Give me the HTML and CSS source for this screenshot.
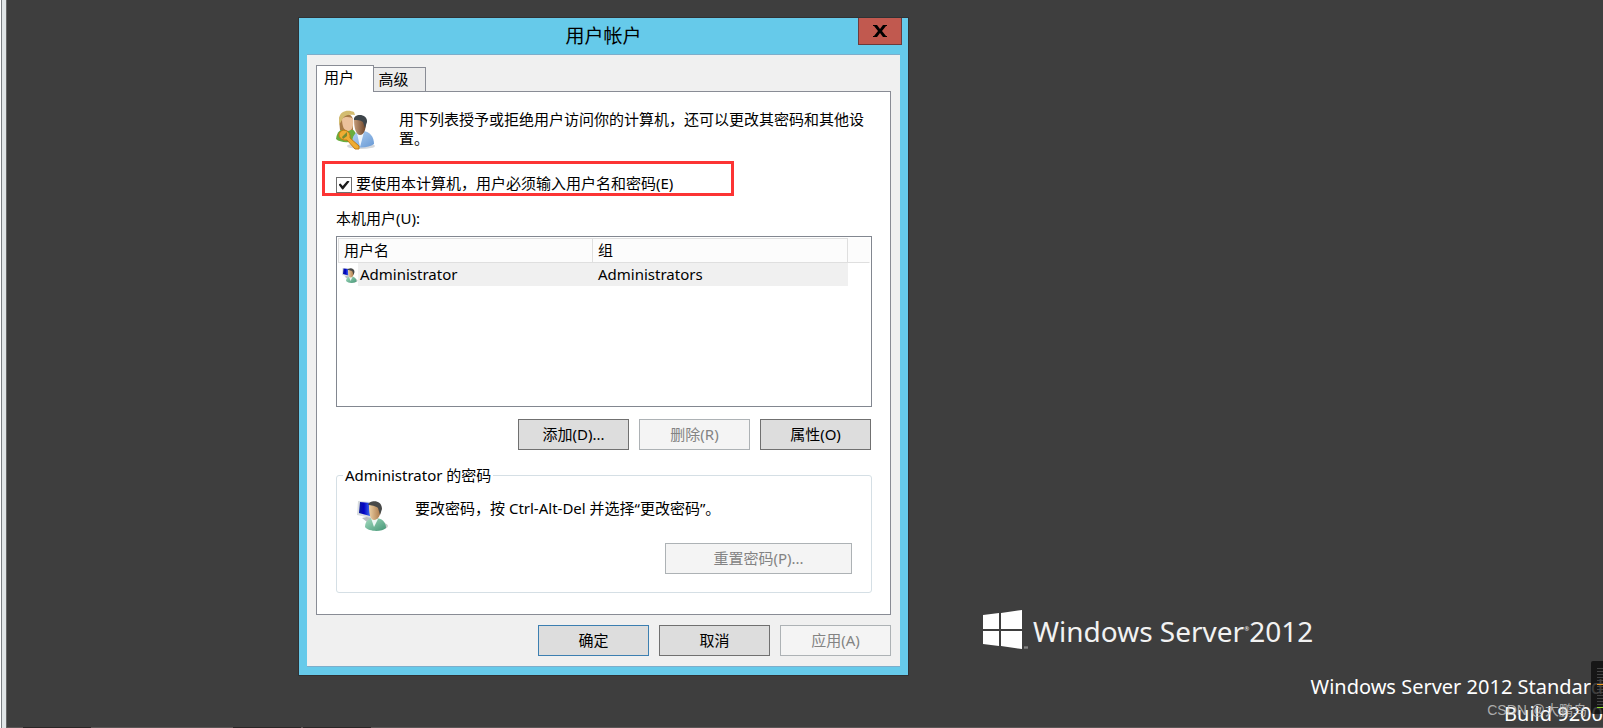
FILE: index.html
```html
<!DOCTYPE html>
<html lang="zh-CN">
<head>
<meta charset="utf-8">
<title>用户帐户</title>
<link rel="stylesheet" href="styles.css">
</head>
<body>
<svg class="defs" aria-hidden="true">
  <defs>
    <linearGradient id="screen" x1="0" y1="0" x2="1" y2="0"><stop offset="0" stop-color="#0a1a9c"/><stop offset=".45" stop-color="#0303c4"/><stop offset="1" stop-color="#3d6cf0"/></linearGradient>
    <linearGradient id="skin" x1="0" y1="0" x2="1" y2="0"><stop offset="0" stop-color="#ecd0a4"/><stop offset="1" stop-color="#a87545"/></linearGradient>
    <linearGradient id="darkskin" x1="0" y1="0" x2="1" y2="0"><stop offset="0" stop-color="#c49a78"/><stop offset="1" stop-color="#6b4328"/></linearGradient>
    <linearGradient id="green" x1="0" y1="0" x2="1" y2="1"><stop offset="0" stop-color="#a5dcc0"/><stop offset="1" stop-color="#459676"/></linearGradient>
    <linearGradient id="blue" x1="0" y1="0" x2="1" y2="1"><stop offset="0" stop-color="#b4d4f5"/><stop offset="1" stop-color="#6798d4"/></linearGradient>
    <symbol id="user" viewBox="0 0 32 32">
      <ellipse cx="21" cy="27" rx="10" ry="4" fill="#c9cbc9"/>
      <path d="M5 19l9-2 2 5-6 1z" fill="#b9bec0"/>
      <path d="M1 2l13 1v16L0 16z" fill="#d8dcdf"/>
      <path d="M3 3l10 1v13L2 14z" fill="url(#screen)"/>
      <path d="M8 28c0-6 4-9 10-9 7 0 11 4 11 10-4 4-17 4-21-1z" fill="url(#green)"/>
      <path d="M14 19l3 9 4-8z" fill="#eef7f5"/>
      <path d="M12 7c0-4 11-5 12 2 0 7-3 12-7 12s-5-7-5-14z" fill="url(#skin)"/>
      <path d="M11 6c1-5 14-6 14 4l-2 6-2-7c-2-2-7-3-10-3z" fill="#484948"/>
    </symbol>
  </defs>
</svg>
<div class="screen">
  <div class="edge"></div>
  <main class="desktop">
    <div class="brand">
      <svg class="flag" viewBox="0 0 46 40" aria-hidden="true">
        <path d="M0 5l16-2v16H0zM18 3l21-3v19H18zM0 21h16v15L0 34zM18 21h21v18l-21-3z" fill="#fff"/>
        <path d="M41 37h4M41 38h4" stroke="#999"/>
      </svg>
      <span>Windows Server<small>®</small>2012</span>
    </div>
    <div class="version">
      <div>Windows Server 2012 Standard</div>
      <div>Build 9200</div>
    </div>
    <div class="watermark">CSDN @大鹏鸟</div>
    <div class="meter"><i class="orange"></i><i class="lime"></i></div>

    <section class="dialog" aria-labelledby="title">
      <header class="titlebar">
        <h1 id="title">用户帐户</h1>
        <button class="close" aria-label="关闭"><svg viewBox="0 0 14 12"><path d="M0 0h4l3 4 3-4h4v1h-1L9 6l4 5h1v1h-4L7 8l-3 4H0v-1h1l4-5-4-5H0z"/></svg></button>
      </header>
      <div class="client">
        <div class="tabs" role="tablist">
          <button class="tab active" role="tab" aria-selected="true">用户</button>
          <button class="tab" role="tab" aria-selected="false">高级</button>
        </div>
        <div class="panel" role="tabpanel">
          <div class="intro">
            <svg class="users" viewBox="0 0 40 40" aria-hidden="true">
              <ellipse cx="25" cy="36" rx="14" ry="3" fill="#d5d8dc"/>
              <path d="M0 29c1-8 5-10 10-11 8 0 10 3 11 12-6 3-17 3-21-1z" fill="#69ad3e"/>
              <path d="M3 10c0-8 14-9 14 1v9H4z" fill="#a77a46"/>
              <path d="M6 9c2-3 10-2 11 0 1 7-1 12-5 12S6 16 6 9z" fill="#ebc19c"/>
              <path d="M3 9C4-1 14 0 18 2l1 3C12 4 8 5 6 10l-3 5z" fill="#d3bc70"/>
              <path d="M16 35c0-10 3-13 10-14 8 0 12 6 12 13-5 4-17 5-22 1z" fill="url(#blue)"/>
              <path d="M21 23l3 14 4-15z" fill="#eff6fc"/>
              <path d="M18 10c1-5 12-5 12 2 0 7-2 13-6 13s-6-7-6-15z" fill="url(#darkskin)"/>
              <path d="M18 10c-1-7 14-7 13 2l-2 6-2-6c-3-2-6-2-9-2z" fill="#3e454a"/>
              <path d="M4 22c4-4 11-1 10 6l9 8v3h-4l-8-9c-6 1-10-4-7-8z" fill="#efac32" stroke="#c37a15"/>
              <path d="M6 27l5-5v4l-4 3z" fill="#768c31"/>
            </svg>
            <p>用下列表授予或拒绝用户访问你的计算机，还可以更改其密码和其他设置。</p>
          </div>
          <div class="require">
            <input type="checkbox" id="must" checked>
            <label for="must">要使用本计算机，用户必须输入用户名和密码(E)</label>
            <span class="highlight"></span>
          </div>
          <div class="caption" id="local">本机用户(U):</div>
          <div class="list">
            <table aria-labelledby="local">
              <thead><tr><th class="name">用户名</th><th class="group">组</th><th></th></tr></thead>
              <tbody><tr><td class="member"><svg aria-hidden="true"><use href="#user"/></svg><span>Administrator</span></td><td class="role">Administrators</td><td></td></tr></tbody>
            </table>
          </div>
          <div class="actions">
            <button class="btn">添加(D)...</button>
            <button class="btn" disabled>删除(R)</button>
            <button class="btn">属性(O)</button>
          </div>
          <fieldset>
            <legend>Administrator 的密码</legend>
            <div class="hint">
              <svg aria-hidden="true"><use href="#user"/></svg>
              <p>要改密码，按 Ctrl-Alt-Del 并选择“更改密码”。</p>
            </div>
            <button class="btn reset" disabled>重置密码(P)...</button>
          </fieldset>
        </div>
        <footer class="actions">
          <button class="btn primary">确定</button>
          <button class="btn">取消</button>
          <button class="btn" disabled>应用(A)</button>
        </footer>
      </div>
    </section>
  </main>
  <div class="taskline"><i></i><i></i><i></i></div>
</div>
</body>
</html>
```

FILE: styles.css
```css
* { box-sizing: border-box; }
body {
  margin: 0;
  font: 15px/19px "Noto Sans", "Noto Sans CJK SC", sans-serif;
  color: #000;
}
h1, p { margin: 0; font-weight: 400; }
button { font: inherit; color: inherit; padding: 0; border-radius: 0; }
.defs { position: absolute; width: 0; height: 0; }

.screen {
  display: grid;
  grid-template: 1fr 1px / 7px 1fr;
  height: 100vh;
  overflow: hidden;
  background: #3e3e3e;
}
.edge {
  grid-row: 1 / 3;
  background: #e1e5e7;
  border-left: 1px solid #fff;
  border-right: 1px solid #666;
  box-shadow: inset 1px 0 #7c8084;
}
.desktop { position: relative; overflow: hidden; }
.taskline { display: flex; background: #5b5656; padding-left: 16px; }
.taskline i { width: 68px; background: #2a2626; }
.taskline i:nth-child(2) { margin-left: 142px; }
.taskline i:nth-child(3) { margin-left: 2px; }

/* Desktop branding */
.brand {
  position: absolute;
  left: 976px;
  bottom: 77px;
  display: flex;
  align-items: center;
  gap: 4px;
  color: #f2f2f2;
  font-size: 28px;
  line-height: 38px;
  white-space: nowrap;
}
.brand small { font-size: 6px; vertical-align: 11px; }
.flag { width: 46px; height: 40px; }
.version {
  position: absolute;
  right: 0;
  bottom: 0;
  color: #fff;
  font-size: 20px;
  line-height: 27px;
  text-align: right;
  white-space: nowrap;
}
.watermark {
  position: absolute;
  right: 16px;
  bottom: 7px;
  color: #c8c8c8;
  opacity: .8;
  font: 14px/20px "Liberation Sans", "Noto Sans CJK SC", sans-serif;
}
.meter {
  position: absolute;
  right: 0;
  bottom: 13px;
  width: 12px;
  height: 53px;
  padding: 7px 0 0 6px;
  border-radius: 2px 0 0 2px;
  background: rgba(12, 12, 12, .8);
}
.meter::before {
  content: "";
  display: block;
  height: 40px;
  background: repeating-linear-gradient(#444 0 1px, transparent 1px 3px);
}
.meter i { position: absolute; right: 0; width: 6px; height: 1px; }
.orange { top: 23px; background: #f29a1e; }
.lime { top: 46px; background: #8edb2c; }

/* Dialog window */
.dialog {
  position: absolute;
  left: 292px;
  top: 18px;
  width: 609px;
  padding: 0 8px 8px;
  background: #66caea;
  box-shadow: 0 0 0 1px #303234;
}
.titlebar { position: relative; padding: 2px 0; }
.titlebar h1 { font-size: 19px; line-height: 32px; text-align: center; }
.close {
  position: absolute;
  top: 0;
  right: -2px;
  width: 44px;
  height: 27px;
  display: grid;
  place-items: center;
  border: 1px solid #6d3b3b;
  border-top: 0;
  background: #c1594f;
}
.close svg { width: 14px; height: 12px; }
.client {
  padding: 10px 9px 10px;
  background: #f0f0f0;
  border-top: 1px solid #7daecb;
  border-bottom: 1px solid #7daecb;
}
.tabs { display: flex; align-items: flex-end; }
.tab {
  width: 52px;
  height: 24px;
  padding-right: 12px;
  border: 1px solid #898c95;
  border-width: 1px 1px 0 0;
  background: #ebebeb;
}
.tab.active {
  z-index: 1;
  width: 58px;
  height: 27px;
  margin-bottom: -1px;
  padding: 0 12px 4px 0;
  border-left-width: 1px;
  background: #fff;
}
.panel {
  padding: 18px 18px 21px 19px;
  background: #fff;
  border: 1px solid #898c95;
}
.intro { display: grid; grid-template-columns: 40px 1fr; gap: 23px; }
.intro p { margin-right: 6px; }
.users { width: 40px; height: 40px; }
.require {
  position: relative;
  display: flex;
  align-items: flex-start;
  gap: 4px;
  margin-top: 24px;
}
.require input {
  appearance: none;
  width: 16px;
  height: 16px;
  margin: 3px 0 0;
  border: 1px solid #707070;
  background: #fff;
  display: grid;
  place-items: center;
}
.require input:checked::before {
  content: "";
  width: 11px;
  height: 9px;
  background: #1c1c1c;
  clip-path: polygon(0 44%, 18% 32%, 38% 62%, 82% 0, 100% 12%, 42% 100%, 34% 100%);
}
.highlight {
  position: absolute;
  inset: -13px 138px -3px -14px;
  border: 3px solid #fc3434;
  pointer-events: none;
}
.caption { margin: 16px 0 8px; }
.list { min-height: 171px; padding: 1px; border: 1px solid #828790; }
table { width: 100%; border-collapse: separate; border-spacing: 0; table-layout: fixed; }
th {
  height: 25px;
  padding: 0 5px;
  text-align: left;
  font-weight: 400;
  background: #fcfcfc;
  border: 1px solid #dfdfdf;
  border-left: 0;
}
th:first-child { border-left: 1px solid #dfdfdf; }
th:last-child { width: 22px; border-color: transparent; border-bottom-color: #dfdfdf; }
td { height: 23px; padding: 0; background: #f0f0f0; }
td:last-child { background: none; }
.member { display: flex; align-items: center; gap: 2px; padding-left: 4px; background: linear-gradient(90deg, #fff 20px, #f0f0f0 20px); }
.member svg { width: 16px; height: 16px; }
.role { padding-left: 5px; }
.actions { display: flex; justify-content: flex-end; gap: 10px; margin: 12px 1px 0 0; }
footer.actions { margin: 10px 0 0; }
.btn { width: 111px; height: 31px; background: #ddd; border: 1px solid #707070; }
.btn:disabled { color: #838383; background: #f4f4f4; border-color: #adb2b5; }
.primary { border-color: #3c7fb1; }
fieldset {
  display: flex;
  flex-direction: column;
  margin: 16px 0 0;
  padding: 14px 19px 18px 20px;
  border: 1px solid #d5dfe5;
  border-radius: 3px;
}
legend { margin-left: -14px; padding: 0 2px; }
.hint { display: flex; gap: 26px; }
.hint svg { width: 32px; height: 32px; }
.reset { align-self: flex-end; width: 187px; margin-top: 12px; }
```
